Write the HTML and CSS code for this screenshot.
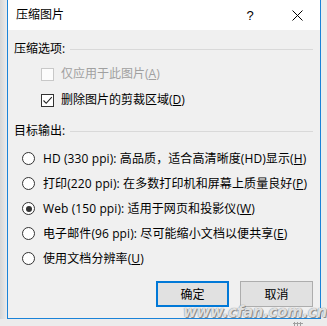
FILE: index.html
```html
<!DOCTYPE html>
<html lang="zh">
<head>
<meta charset="utf-8">
<title>压缩图片</title>
<link rel="stylesheet" href="styles.css">
</head>
<body>
<div class="screen">
  <div class="dialog">
    <div class="titlebar">
      <span class="title">压缩图片</span>
      <span class="help">?</span>
      <span class="close"><svg width="11" height="11" viewBox="0 0 11 11"><path d="M0.5 0.5 L10.5 10.5 M10.5 0.5 L0.5 10.5" stroke="#000" stroke-width="1" fill="none"/></svg></span>
    </div>
    <div class="body">
      <div class="group-label"><span>压缩选项:</span><i class="rule"></i></div>
      <div class="check-row disabled"><span class="box"></span><span>仅应用于此图片(<u>A</u>)</span></div>
      <div class="check-row"><span class="box"><svg width="11" height="11" viewBox="0 0 11 11"><path d="M1.5 5.5 L4.2 8.3 L9.8 2.2" stroke="#222" stroke-width="1.1" fill="none"/></svg></span><span>删除图片的剪裁区域(<u>D</u>)</span></div>
      <div class="group-label second"><span>目标输出:</span><i class="rule"></i></div>
      <div class="radios">
        <div class="radio-row"><span class="radio"></span><span>HD (330 ppi): 高品质，适合高清晰度(HD)显示(<u>H</u>)</span></div>
        <div class="radio-row"><span class="radio"></span><span>打印(220 ppi): 在多数打印机和屏幕上质量良好(<u>P</u>)</span></div>
        <div class="radio-row"><span class="radio on"></span><span>Web (150 ppi): 适用于网页和投影仪(<u>W</u>)</span></div>
        <div class="radio-row"><span class="radio"></span><span>电子邮件(96 ppi): 尽可能缩小文档以便共享(<u>E</u>)</span></div>
        <div class="radio-row"><span class="radio"></span><span>使用文档分辨率(<u>U</u>)</span></div>
      </div>
      <div class="buttons">
        <span class="btn default">确定</span>
        <span class="btn">取消</span>
      </div>
    </div>
  </div>
  <div class="below"><span class="grip"></span></div>
  <div class="watermark">www.cfan.com.cn</div>
</div>
</body>
</html>
```
FILE: styles.css
```css
html, body {
  margin: 0;
  padding: 0;
}
body {
  width: 327px;
  height: 326px;
  overflow: hidden;
  background: #e4e4e4;
  font-family: "Open Sans", "Noto Sans CJK SC", sans-serif;
  font-size: 12px;
  color: #000;
}
.screen {
  position: relative;
  width: 327px;
  height: 326px;
  background: linear-gradient(to right, #d6d6d6 0, #ececec 7px, #ececec 100%);
}
.dialog {
  margin-left: 7px;
  width: 312px;
  height: 318px;
  border: 1px solid #1a83d8;
  border-top: none;
  background: #f0f0f0;
  display: flex;
  flex-direction: column;
}
.titlebar {
  height: 30px;
  background: #fff;
  display: flex;
  align-items: center;
  padding-left: 8px;
  flex: none;
}
.title {
  flex: 1;
  line-height: 16px;
}
.help {
  width: 12px;
  font-family: "Liberation Sans", sans-serif;
  font-size: 13px;
  margin-right: 36px;
  text-align: center;
}
.close {
  display: flex;
  margin-right: 17px;
}
.body {
  flex: 1;
  display: flex;
  flex-direction: column;
  padding: 11px 7px 0 6px;
}
.group-label {
  height: 16px;
  display: flex;
  align-items: center;
  line-height: 16px;
}
.group-label.second {
  margin-top: 10px;
}
.rule {
  flex: 1;
  height: 1px;
  background: #d9d9d9;
  margin-left: 5px;
  margin-right: 0;
}
.check-row {
  height: 26px;
  display: flex;
  align-items: center;
  padding-left: 27px;
  line-height: 16px;
}
.group-label + .check-row {
  margin-top: 4px;
}
.box {
  width: 11px;
  height: 11px;
  border: 1px solid #333;
  background: #fff;
  margin-right: 7px;
  display: flex;
}
.check-row.disabled {
  color: #a0a0a0;
}
.check-row.disabled .box {
  border-color: #c8c8c8;
  background: #fcfcfc;
}
.radios {
  margin-top: 7px;
  display: flex;
  flex-direction: column;
}
.radio-row {
  height: 25px;
  display: flex;
  align-items: center;
  padding-left: 8px;
  line-height: 16px;
  white-space: nowrap;
  letter-spacing: 0.1px;
}
.radio {
  width: 11px;
  height: 11px;
  border: 1px solid #333;
  border-radius: 50%;
  background: #fff;
  margin-right: 8px;
  display: flex;
  align-items: center;
  justify-content: center;
  flex: none;
}
.radio.on::after {
  content: "";
  width: 6px;
  height: 6px;
  border-radius: 50%;
  background: #333;
}
u {
  text-decoration: underline;
  text-underline-offset: 1px;
}
.buttons {
  margin-top: 10px;
  display: flex;
  justify-content: flex-end;
  gap: 11px;
}
.btn {
  width: 71px;
  height: 24px;
  border: 1px solid #adadad;
  background: #e1e1e1;
  display: flex;
  align-items: center;
  justify-content: center;
}
.btn.default {
  width: 69px;
  height: 22px;
  border: 2px solid #0078d7;
}
.below {
  height: 7px;
  position: relative;
  background: #ececec;
}
.grip {
  position: absolute;
  left: 293px;
  top: 3px;
  width: 10px;
  height: 4px;
  background-image: radial-gradient(circle, #a0a0a0 1px, transparent 1.2px);
  background-size: 3px 3px;
}
.watermark {
  position: absolute;
  left: 183px;
  top: 305px;
  line-height: 14px;
  height: 14px;
  font-family: "DejaVu Sans", sans-serif;
  font-weight: bold;
  font-style: italic;
  font-size: 15px;
  letter-spacing: -0.3px;
  color: rgba(240, 240, 240, 0.9);
  text-shadow: 0 0 1px #666, 1px 1px 0 rgba(110,110,110,0.7);
}
```
